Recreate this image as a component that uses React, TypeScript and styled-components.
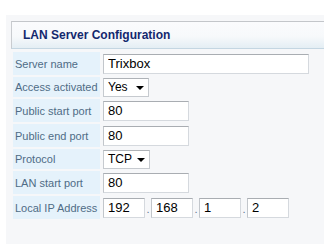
import styled, { createGlobalStyle } from 'styled-components';

const GlobalStyle = createGlobalStyle`
    html, body {
        margin: 0;
        background: #ffffff;
        font-family: "Liberation Sans", Arial, sans-serif;
    }
`;

const Page = styled.div`
    width: 324px;
    height: 244px;
    padding: 15px 0 0 6px;
    box-sizing: border-box;
    overflow: hidden;
`;

const Panel = styled.div`
    height: 100%;
    background: #f6f7f9;
    padding: 6px 0 0 5px;
    box-sizing: border-box;
`;

const Header = styled.div`
    height: 28px;
    box-sizing: border-box;
    border-top: 1px solid #c3c6ca;
    border-left: 1px solid #c9ccd0;
    border-bottom: 1px solid #c4d6e2;
    background: linear-gradient(#fafbfd 0%, #f7f9fb 55%, #e4eef4 100%);
    padding-left: 11px;
    display: flex;
    align-items: center;
    font-size: 12px;
    font-weight: bold;
    color: #13286e;
`;

const FormTable = styled.table`
    border-collapse: separate;
    border-spacing: 2px;
    margin-top: 1px;
`;

const Row = styled.tr<{ $tall?: boolean }>`
    height: ${({ $tall }) => ($tall ? '23px' : '20px')};
`;

const LabelCell = styled.td`
    width: 83px;
    padding: 0 2px;
    background: #e5f2fb;
    color: #4f6c86;
    font-size: 11px;
    white-space: nowrap;
    vertical-align: middle;
`;

const FieldCell = styled.td`
    padding: 0 0 0 1px;
    vertical-align: middle;
`;

const TextInput = styled.input<{ $width: number }>`
    width: ${({ $width }) => $width}px;
    height: 20px;
    box-sizing: border-box;
    border: 1px solid #d5d9de;
    border-top-color: #a9adb2;
    border-left-color: #c2c6cb;
    padding: 0 4px;
    margin: 0;
    font-family: "Liberation Sans", Arial, sans-serif;
    font-size: 13px;
    color: #000;
    background: #fff;
    outline: none;
    display: block;
`;

const IpGroup = styled.div`
    display: flex;
    align-items: center;
`;

const IpDot = styled.span`
    width: 6px;
    text-align: center;
    font-size: 11px;
    color: #5b7590;
    line-height: 1;
    padding-top: 4px;
`;

const Dropdown = styled.div<{ $width: number }>`
    width: ${({ $width }) => $width}px;
    height: 19px;
    box-sizing: border-box;
    border: 1px solid #c6cacf;
    border-top-color: #aeb2b7;
    background: #fff;
    display: flex;
    align-items: center;
    justify-content: space-between;
    padding: 0 4px 0 4px;
    font-size: 12px;
    color: #000;
`;

const Arrow = styled.span`
    width: 0;
    height: 0;
    border-left: 4px solid transparent;
    border-right: 4px solid transparent;
    border-top: 4px solid #000;
    margin-top: 2px;
`;

export default function App() {
    return (
        <>
            <GlobalStyle />
            <Page>
                <Panel>
                    <Header>LAN Server Configuration</Header>
                    <FormTable>
                        <tbody>
                            <Row $tall>
                                <LabelCell>Server name</LabelCell>
                                <FieldCell><TextInput $width={206} defaultValue="Trixbox" /></FieldCell>
                            </Row>
                            <Row>
                                <LabelCell>Access activated</LabelCell>
                                <FieldCell><Dropdown $width={46}>Yes<Arrow /></Dropdown></FieldCell>
                            </Row>
                            <Row $tall>
                                <LabelCell>Public start port</LabelCell>
                                <FieldCell><TextInput $width={86} defaultValue="80" /></FieldCell>
                            </Row>
                            <Row $tall>
                                <LabelCell>Public end port</LabelCell>
                                <FieldCell><TextInput $width={86} defaultValue="80" /></FieldCell>
                            </Row>
                            <Row>
                                <LabelCell>Protocol</LabelCell>
                                <FieldCell><Dropdown $width={47}>TCP<Arrow /></Dropdown></FieldCell>
                            </Row>
                            <Row $tall>
                                <LabelCell>LAN start port</LabelCell>
                                <FieldCell><TextInput $width={86} defaultValue="80" /></FieldCell>
                            </Row>
                            <Row $tall>
                                <LabelCell>Local IP Address</LabelCell>
                                <FieldCell>
                                    <IpGroup>
                                        <TextInput $width={42} defaultValue="192" />
                                        <IpDot>.</IpDot>
                                        <TextInput $width={42} defaultValue="168" />
                                        <IpDot>.</IpDot>
                                        <TextInput $width={42} defaultValue="1" />
                                        <IpDot>.</IpDot>
                                        <TextInput $width={42} defaultValue="2" />
                                    </IpGroup>
                                </FieldCell>
                            </Row>
                        </tbody>
                    </FormTable>
                </Panel>
            </Page>
        </>
    );
}
